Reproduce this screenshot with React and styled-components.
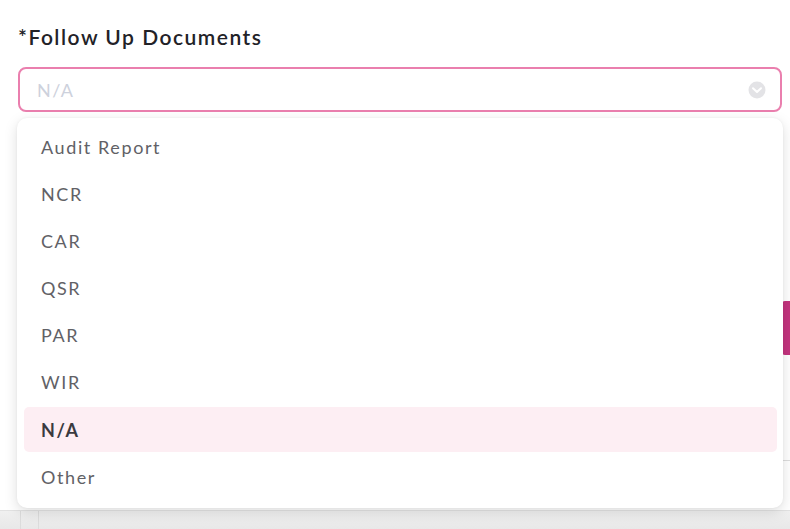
import React from 'react'
import styled, { createGlobalStyle } from 'styled-components'

const GlobalStyle = createGlobalStyle`
  body {
    margin: 0;
    background: #ffffff;
    font-family: Lato, 'Noto Sans', sans-serif;
  }
`

const Page = styled.div`
  position: relative;
  width: 790px;
  height: 529px;
  overflow: hidden;
  background: #ffffff;
  display: flex;
  flex-direction: column;
`

const Field = styled.div`
  padding: 24px 8px 0 18px;
`

const Label = styled.div`
  font-size: 21px;
  font-weight: 600;
  color: #222227;
  line-height: 26px;
  letter-spacing: 1.5px;
`

const Select = styled.div`
  margin-top: 17px;
  height: 45px;
  box-sizing: border-box;
  border: 2px solid #ea7fae;
  border-radius: 8px;
  display: flex;
  align-items: center;
  justify-content: space-between;
  padding: 0 14px 0 17px;
  background: #fff;
`

const Placeholder = styled.span`
  font-size: 18px;
  color: #cdd1dc;
  letter-spacing: 1.5px;
`

const Behind = styled.div`
  flex: 1;
  margin-top: 7px;
  display: flex;
  flex-direction: column;
  align-items: flex-end;
  padding-top: 182px;
`

const SideButton = styled.div`
  width: 8px;
  height: 54px;
  background: #c3347e;
  border-radius: 3px 0 0 3px;
`

const SideRule = styled.div`
  margin-top: 105px;
  width: 8px;
  height: 1px;
  background: #dddddd;
`

const Footer = styled.div`
  margin-top: auto;
  align-self: stretch;
  height: 18px;
  background: linear-gradient(#f0f0f0, #e8e8e8);
  border-top: 1px solid #e2e2e2;
  display: flex;
  padding-left: 20px;
  gap: 17px;
`

const FooterLine = styled.div`
  width: 1px;
  background: #dcdcdc;
`

const Menu = styled.ul`
  position: absolute;
  top: 118px;
  left: 17px;
  width: 766px;
  height: 390px;
  box-sizing: border-box;
  margin: 0;
  list-style: none;
  padding: 6px 6px 0 7px;
  background: #fff;
  border-radius: 10px;
  box-shadow: 0 4px 14px rgba(0, 0, 0, 0.13), 0 0 3px rgba(0, 0, 0, 0.05);
  display: flex;
  flex-direction: column;
  gap: 2.2px;
`

const Item = styled.li`
  height: 45px;
  display: flex;
  align-items: center;
  padding-left: 17px;
  border-radius: 5px;
  font-size: 18px;
  letter-spacing: 1.6px;
  color: ${p => p.active ? '#3a3a3f' : '#616166'};
  font-weight: ${p => p.active ? 700 : 400};
  background: ${p => p.active ? '#fdeef3' : 'transparent'};
`

const Chevron = () => (
  <svg width="18" height="18" viewBox="0 0 18 18">
    <circle cx="9" cy="9" r="8.5" fill="#e3e3e6" />
    <path d="M5 7.2 L9 11 L13 7.2" fill="none" stroke="#ffffff" strokeWidth="2" strokeLinecap="round" strokeLinejoin="round" />
  </svg>
)

const options = ['Audit Report', 'NCR', 'CAR', 'QSR', 'PAR', 'WIR', 'N/A', 'Other']

const App = () => {
  const selected = 'N/A'

  return (
    <Page>
      <GlobalStyle />
      <Field>
        <Label>*Follow Up Documents</Label>
        <Select>
          <Placeholder>N/A</Placeholder>
          <Chevron />
        </Select>
      </Field>
      <Behind>
        <SideButton />
        <SideRule />
        <Footer>
          <FooterLine />
          <FooterLine />
        </Footer>
      </Behind>
      <Menu>
        {options.map(o => (
          <Item key={o} active={o === selected}>{o}</Item>
        ))}
      </Menu>
    </Page>
  )
}

export default App
